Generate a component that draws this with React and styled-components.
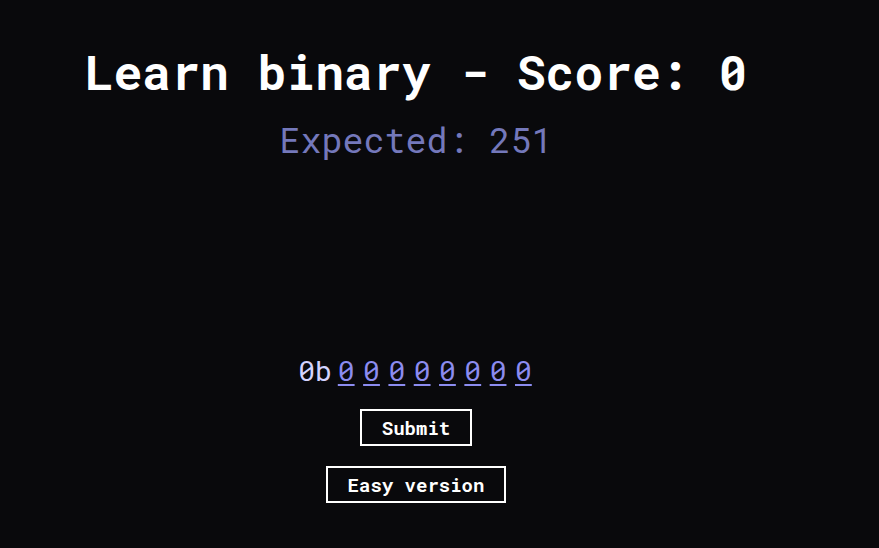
import React from "react";
import styled, { createGlobalStyle } from "styled-components";

const Global = createGlobalStyle`
  html, body { margin: 0; padding: 0; background: #09090c; }
  body { font-family: "Roboto Mono", "DejaVu Sans Mono", "Liberation Mono", monospace; color: #ffffff; }
`;

const Page = styled.main`
  width: 832px;
  height: 548px;
  display: flex;
  flex-direction: column;
  align-items: center;
  box-sizing: border-box;
  padding-top: 44px;
`;

const Title = styled.h1`
  margin: 0;
  font-size: 48px;
  font-weight: 700;
  line-height: 56px;
  color: #ffffff;
`;

const Expected = styled.h2`
  margin: 17px 0 0;
  font-size: 35px;
  font-weight: 400;
  line-height: 44px;
  color: #7478bb;
`;

const BinaryRow = styled.div`
  margin-top: 193px;
  margin-right: 2px;
  display: flex;
  align-items: baseline;
  font-size: 28px;
  line-height: 34px;
  color: #d4d4ff;
`;

const Prefix = styled.span`
  margin-right: 6px;
`;

const Bit = styled.a`
  color: #8c8cf0;
  text-decoration: underline;
  text-underline-offset: 3px;
  text-decoration-thickness: 2px;
  margin-right: 8.5px;
  cursor: pointer;
  &:last-child { margin-right: 0; }
`;

const Button = styled.button`
  margin-top: ${(p) => p.$gap}px;
  background: transparent;
  border: 2px solid #ffffff;
  color: #ffffff;
  font-family: inherit;
  font-weight: 700;
  font-size: 19px;
  line-height: 23px;
  padding: 5px 20px;
  cursor: pointer;
`;

export default function App() {
  const bits = [0, 0, 0, 0, 0, 0, 0, 0];
  return (
    <>
      <Global />
      <Page>
        <Title>Learn binary - Score: 0</Title>
        <Expected>Expected: 251</Expected>
        <BinaryRow>
          <Prefix>0b</Prefix>
          {bits.map((b, i) => (
            <Bit key={i}>{b}</Bit>
          ))}
        </BinaryRow>
        <Button $gap={21}>Submit</Button>
        <Button $gap={20}>Easy version</Button>
      </Page>
    </>
  );
}
